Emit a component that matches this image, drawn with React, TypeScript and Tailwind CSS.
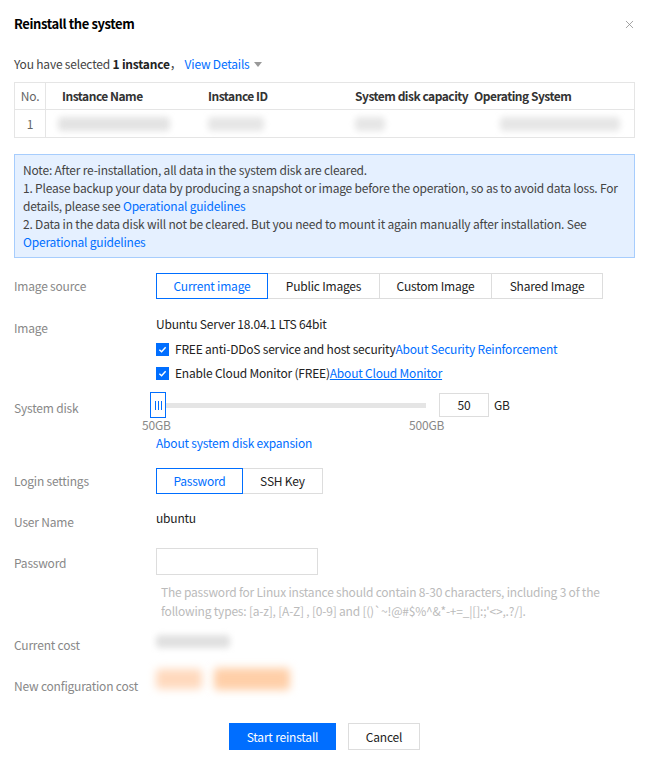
import { X } from "lucide-react";

const font = { fontFamily: '"Noto Sans CJK SC", "Noto Sans", sans-serif' };

function Label({ children, className = "" }: { children: React.ReactNode; className?: string }) {
  return <div className={`w-[142px] shrink-0 text-[12px] leading-[18px] text-[#888] ${className}`}>{children}</div>;
}

function Seg({ items, widths, active }: { items: string[]; widths: string[]; active: number }) {
  return (
    <div className="flex">
      {items.map((it, i) => (
        <div
          key={it}
          className={`h-[26px] flex items-center justify-center text-[12px] border -ml-px first:ml-0 ${widths[i]} ${
            i === active ? "border-[#006eff] text-[#006eff] relative z-10" : "border-[#ddd] text-[#222]"
          }`}
        >
          {it}
        </div>
      ))}
    </div>
  );
}

function Check({ children }: { children: React.ReactNode }) {
  return (
    <div className="flex items-center h-[18px] text-[12px] text-[#222]">
      <span className="w-[13px] h-[13px] bg-[#006eff] flex items-center justify-center mr-[6px]">
        <svg width="9" height="9" viewBox="0 0 10 10" fill="none">
          <path d="M1.5 5.2 L4 7.5 L8.5 2.5" stroke="white" strokeWidth="1.6" />
        </svg>
      </span>
      {children}
    </div>
  );
}

export default function App() {
  return (
    <div className="w-[649px] h-[765px] bg-white relative text-[#222] tracking-[-0.2px]" style={font}>
      {/* Header */}
      <div className="h-12 flex items-center justify-between px-[14px]">
        <h1 className="text-[13px] font-semibold tracking-[-0.4px] text-black">Reinstall the system</h1>
        <X size={13} strokeWidth={1.4} className="text-[#888] mr-[-1px]" />
      </div>

      <div className="px-[14px]">
        <div className="mt-[6px] h-5 flex items-center text-[12px] text-[#444]">
          You have selected&nbsp;<b className="text-[#222]">1 instance</b>，
          <span className="ml-[3px] text-[#006eff]">View Details</span>
          <svg width="8" height="5" viewBox="0 0 8 5" className="ml-[4px] mt-px">
            <path d="M0 0 H8 L4 5 Z" fill="#999" />
          </svg>
        </div>

        {/* Table */}
        <div className="mt-[8px] border border-[#e5e5e5] text-[12px] whitespace-nowrap">
          <div className="flex h-[27px] items-center border-b border-[#e5e5e5] font-semibold tracking-[-0.5px] text-[#333]">
            <div className="w-[31px] h-full flex items-center justify-center border-r border-[#e5e5e5] font-normal tracking-[-0.2px] text-[#666]">No.</div>
            <div className="w-[146px] pl-4">Instance Name</div>
            <div className="w-[147px] pl-4">Instance ID</div>
            <div className="w-[119px] pl-4">System disk capacity</div>
            <div className="flex-1 pl-4">Operating System</div>
          </div>
          <div className="flex h-[27px] items-center">
            <div className="w-[31px] h-full flex items-center justify-center border-r border-[#e5e5e5] text-[#666]">1</div>
            <div className="w-[146px] pl-3">
              <div className="w-[112px] h-[14px] bg-[#e3e3e3] rounded blur-[3px]" />
            </div>
            <div className="w-[147px] pl-4">
              <div className="w-[56px] h-[14px] bg-[#e6e6e6] rounded blur-[3px]" />
            </div>
            <div className="w-[119px] pl-4">
              <div className="w-[30px] h-[14px] bg-[#e6e6e6] rounded blur-[3px]" />
            </div>
            <div className="flex-1 pl-[42px]">
              <div className="w-[120px] h-[14px] bg-[#e6e6e6] rounded blur-[3px]" />
            </div>
          </div>
        </div>

        {/* Note */}
        <div className="mt-[16px] border border-[#a7cdfd] bg-[#e5f0ff] px-[8px] pt-[6px] pb-[6px] text-[12px] leading-[18px] text-[#444]">
          <p>Note: After re-installation, all data in the system disk are cleared.</p>
          <p>
            1. Please backup your data by producing a snapshot or image before the operation, so as to avoid data loss. For details, please see{" "}
            <span className="text-[#006eff]">Operational guidelines</span>
          </p>
          <p>
            2. Data in the data disk will not be cleared. But you need to mount it again manually after installation. See{" "}
            <span className="text-[#006eff]">Operational guidelines</span>
          </p>
        </div>

        {/* Image source */}
        <div className="mt-[15px] flex items-center">
          <Label>Image source</Label>
          <Seg
            items={["Current image", "Public Images", "Custom Image", "Shared Image"]}
            widths={["w-[112px]", "w-[113px]", "w-[113px]", "w-[112px]"]}
            active={0}
          />
        </div>

        {/* Image */}
        <div className="mt-[16px] flex items-start">
          <Label className="mt-[4px]">Image</Label>
          <div className="flex flex-col">
            <div className="text-[12px] leading-[18px] text-[#222]">Ubuntu Server 18.04.1 LTS 64bit</div>
            <div className="mt-[7px]">
              <Check>
                FREE anti-DDoS service and host security<span className="text-[#006eff]">About Security Reinforcement</span>
              </Check>
            </div>
            <div className="mt-[6px]">
              <Check>
                Enable Cloud Monitor (FREE)<span className="text-[#006eff] underline">About Cloud Monitor</span>
              </Check>
            </div>
          </div>
        </div>

        {/* System disk */}
        <div className="mt-[10px] flex items-start">
          <Label className="mt-[7px]">System disk</Label>
          <div className="flex flex-col -ml-[6px]">
            <div className="flex items-center">
              <div className="relative w-[276px] h-[26px] flex items-center">
                <div className="ml-[10px] w-[266px] h-[5px] bg-[#e5e5e5]" />
                <div className="absolute left-0 top-0 w-[16px] h-[26px] bg-white border border-[#006eff] flex items-center justify-center gap-[2px]">
                  <span className="w-px h-[9px] bg-[#006eff]" />
                  <span className="w-px h-[9px] bg-[#006eff]" />
                  <span className="w-px h-[9px] bg-[#006eff]" />
                </div>
              </div>
              <div className="ml-[13px] w-[50px] h-[24px] border border-[#ddd] flex items-center justify-center text-[12px] text-[#222]">50</div>
              <span className="ml-[5px] text-[12px] text-[#222]">GB</span>
            </div>
            <div className="relative h-[14px] text-[12px] text-[#888] leading-[14px]">
              <span className="absolute left-[-8px] top-0">50GB</span>
              <span className="absolute left-[259px] top-0">500GB</span>
            </div>
            <div className="ml-[6px] mt-[2px] text-[12px] leading-[18px] text-[#006eff]">About system disk expansion</div>
          </div>
        </div>

        {/* Login settings */}
        <div className="mt-[16px] flex items-center">
          <Label>Login settings</Label>
          <Seg items={["Password", "SSH Key"]} widths={["w-[87px]", "w-[81px]"]} active={0} />
        </div>

        {/* User name */}
        <div className="mt-[15px] flex items-start">
          <Label className="mt-[4px]">User Name</Label>
          <div className="text-[12px] leading-[18px] text-[#222]">ubuntu</div>
        </div>

        {/* Password */}
        <div className="mt-[17px] flex items-start">
          <Label className="mt-[6px]">Password</Label>
          <div className="flex flex-col">
            <div className="w-[162px] h-[27px] border border-[#ddd]" />
            <p className="mt-[7px] ml-[5px] w-[445px] text-[12px] leading-[19px] text-[#bbb]">
              The password for Linux instance should contain 8-30 characters, including 3 of the following types: [a-z], [A-Z] , [0-9] and [()`~!@#$%^&*-+=_|{}[]:;'&lt;&gt;,.?/].
            </p>
          </div>
        </div>

        {/* Current cost */}
        <div className="mt-[10px] flex items-start h-[22px]">
          <Label className="mt-[6px]">Current cost</Label>
          <div className="-ml-[4px] w-[86px] h-[22px] flex items-center">
            <div className="ml-[4px] w-[74px] h-[13px] bg-[#e0e0e0] rounded blur-[3px]" />
          </div>
        </div>

        {/* New cost */}
        <div className="mt-[10px] flex items-start h-[33px]">
          <Label className="mt-[15px]">New configuration cost</Label>
          <div className="-ml-[4px] h-[33px] flex items-center gap-[12px]">
            <div className="ml-[4px] w-[46px] h-[20px] bg-[#ffd9bd] rounded blur-[4px]" />
            <div className="w-[76px] h-[22px] bg-[#ffcfa8] rounded blur-[4px]" />
          </div>
        </div>

        {/* Footer */}
        <div className="mt-[28px] flex justify-center gap-[12px]">
          <button className="w-[107px] h-[27px] bg-[#006eff] text-white text-[12px]">Start reinstall</button>
          <button className="w-[72px] h-[27px] border border-[#ddd] text-[12px] text-[#222]">Cancel</button>
        </div>
      </div>
    </div>
  );
}
